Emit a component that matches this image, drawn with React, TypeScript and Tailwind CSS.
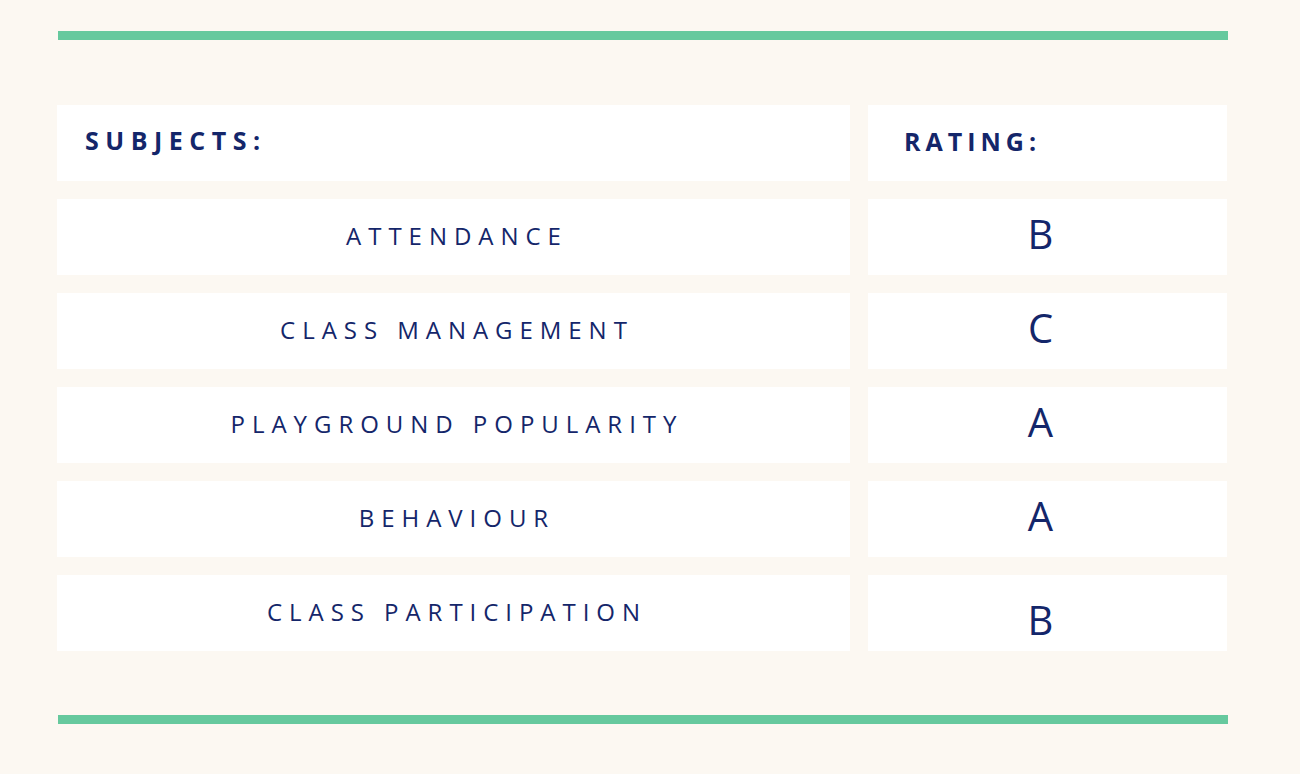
import React from 'react';

const rows: { subject: string; rating: string; nudge?: boolean }[] = [
  { subject: 'Attendance', rating: 'B' },
  { subject: 'Class Management', rating: 'C' },
  { subject: 'Playground Popularity', rating: 'A' },
  { subject: 'Behaviour', rating: 'A' },
  { subject: 'Class Participation', rating: 'B', nudge: true },
];

const App: React.FC = () => {
  return (
    <div
      className="min-h-[774px] w-full bg-[#fcf8f2] pt-[31px] pl-[57px] text-[#14266a]"
      style={{ fontFamily: '"Open Sans", "DejaVu Sans", sans-serif' }}
    >
      <div className="w-[1171px]">
        <div className="ml-px h-[9px] bg-[#66c99e]" />

        <div className="mt-[65px] grid grid-cols-[793px_359px] gap-x-[18px] gap-y-[18px]">
          <div className="flex h-[76px] items-center bg-white pl-[28px] pb-[4px]">
            <span className="text-[25px] font-bold uppercase tracking-[0.26em]">Subjects:</span>
          </div>
          <div className="flex h-[76px] items-center bg-white pl-[36px] pb-[2px]">
            <span className="text-[25px] font-bold uppercase tracking-[0.2em]">Rating:</span>
          </div>

          {rows.map((row) => (
            <React.Fragment key={row.subject}>
              <div className="flex h-[76px] items-center justify-center bg-white pb-[2px]">
                <span className="pl-[0.29em] text-[24px] uppercase tracking-[0.29em]">{row.subject}</span>
              </div>
              <div className="flex h-[76px] items-center justify-center bg-white pr-[14px] pb-[6px]">
                <span className={`text-[40px] leading-none ${row.nudge ? 'pt-[20px]' : ''}`}>
                  {row.rating}
                </span>
              </div>
            </React.Fragment>
          ))}
        </div>

        <div className="ml-px mt-[64px] h-[9px] bg-[#66c99e]" />
      </div>
    </div>
  );
};

export default App;
